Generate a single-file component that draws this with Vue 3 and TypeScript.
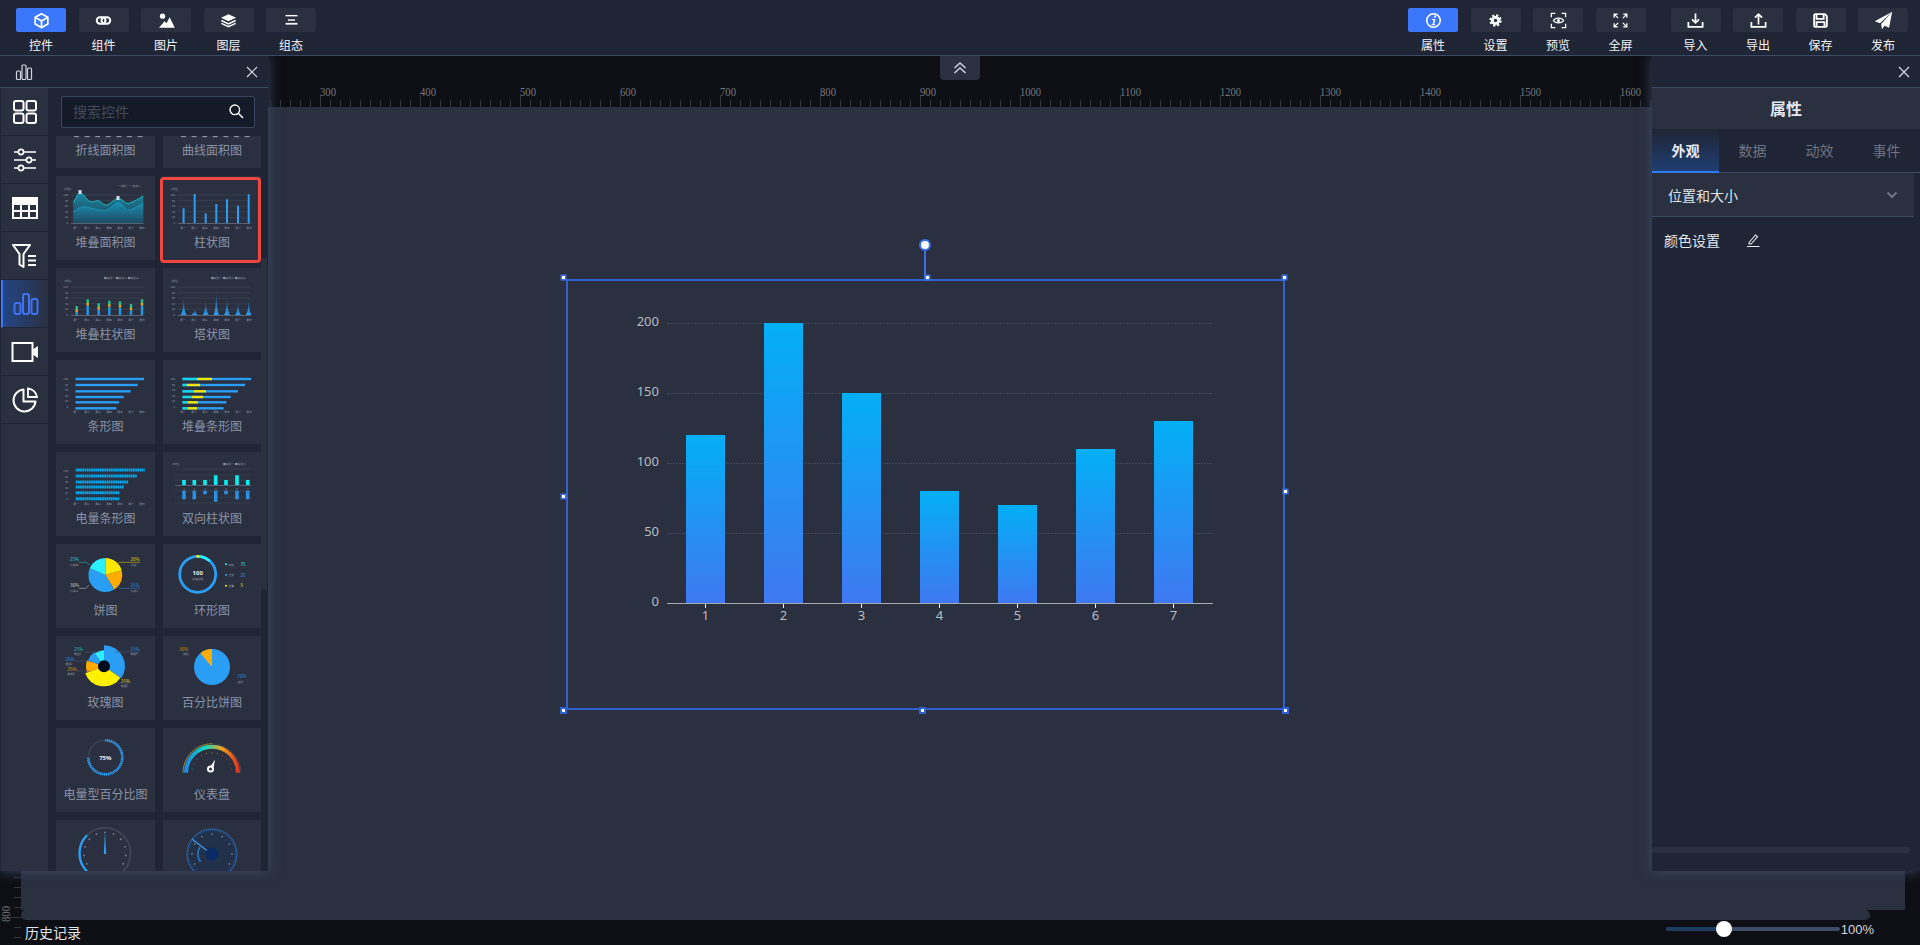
<script setup lang="ts">
type Pt = [number, number]
interface Card { name: string; kind: string; sel?: boolean }

const leftTools = [
  { label: '控件', on: true, icon: 'box' },
  { label: '组件', icon: 'link' },
  { label: '图片', icon: 'image' },
  { label: '图层', icon: 'layers' },
  { label: '组态', icon: 'align' },
]
const viewTools = [
  { label: '属性', on: true, icon: 'info' },
  { label: '设置', icon: 'gear' },
  { label: '预览', icon: 'scan' },
  { label: '全屏', icon: 'full' },
]
const fileTools = [
  { label: '导入', icon: 'import' },
  { label: '导出', icon: 'export' },
  { label: '保存', icon: 'save' },
  { label: '发布', icon: 'send' },
]
const railIcons = ['grid', 'sliders', 'table', 'filter', 'bars', 'video', 'pie']
const tabs = ['外观', '数据', '动效', '事件']

const cards: Card[] = [
  { name: '折线面积图', kind: 'blank' },
  { name: '曲线面积图', kind: 'blank' },
  { name: '堆叠面积图', kind: 'area' },
  { name: '柱状图', kind: 'bar', sel: true },
  { name: '堆叠柱状图', kind: 'stack' },
  { name: '塔状图', kind: 'tower' },
  { name: '条形图', kind: 'hbar' },
  { name: '堆叠条形图', kind: 'hstack' },
  { name: '电量条形图', kind: 'power' },
  { name: '双向柱状图', kind: 'both' },
  { name: '饼图', kind: 'pie' },
  { name: '环形图', kind: 'ring' },
  { name: '玫瑰图', kind: 'rose' },
  { name: '百分比饼图', kind: 'percent' },
  { name: '电量型百分比图', kind: 'dash' },
  { name: '仪表盘', kind: 'gauge' },
  { name: '', kind: 'speed' },
  { name: '', kind: 'dial' },
]

const hasAxis = ['area', 'bar', 'stack', 'tower', 'hbar', 'hstack', 'power']
const gridKinds = ['area', 'bar', 'stack', 'tower']
const days = ['周一', '周二', '周三', '周四', '周五', '周六', '周日']
const ys = [19, 24.6, 30.2, 35.8, 41.4, 47]
const yNums = ['100', '80', '60', '40', '20', '0']
const blankDots = Array.from({ length: 7 }, (_, i) => 18 + i * 10.6)

function pol(cx: number, cy: number, r: number, d: number): Pt {
  const a = ((d - 90) * Math.PI) / 180
  return [cx + r * Math.cos(a), cy + r * Math.sin(a)]
}
function sector(cx: number, cy: number, r: number, a: number, b: number): string {
  const s = pol(cx, cy, r, a)
  const e = pol(cx, cy, r, b)
  return `M${cx} ${cy}L${s[0]} ${s[1]}A${r} ${r} 0 ${b - a > 180 ? 1 : 0} 1 ${e[0]} ${e[1]}Z`
}
function arc(cx: number, cy: number, r: number, a: number, b: number): string {
  const s = pol(cx, cy, r, a)
  const e = pol(cx, cy, r, b)
  return `M${s[0]} ${s[1]}A${r} ${r} 0 ${b - a > 180 ? 1 : 0} 1 ${e[0]} ${e[1]}`
}
function smooth(p: Pt[]): string {
  let d = `M${p[0][0]} ${p[0][1]}`
  for (let i = 0; i < p.length - 1; i++) {
    const a = p[Math.max(i - 1, 0)]
    const b = p[i]
    const c = p[i + 1]
    const e = p[Math.min(i + 2, p.length - 1)]
    d += `C${b[0] + (c[0] - a[0]) / 6} ${b[1] + (c[1] - a[1]) / 6} ${c[0] - (e[0] - b[0]) / 6} ${c[1] - (e[1] - b[1]) / 6} ${c[0]} ${c[1]}`
  }
  return d
}
const areaA: Pt[] = [[17.3, 27.3], [24, 16.7], [34, 25.7], [42.3, 24.7], [50.7, 29], [62.3, 22.3], [72.3, 27.3], [87.3, 20]]
const areaB: Pt[] = [[17.3, 35.7], [27.3, 30.7], [40.7, 33.3], [50.7, 34], [62.3, 26.7], [72.3, 34], [87.3, 27.3]]
const areaALine = smooth(areaA)
const areaBLine = smooth(areaB)
const areaAFill = areaALine + 'L87.3 47L17.3 47Z'
const areaBFill = areaBLine + 'L87.3 47L17.3 47Z'

const barX = [20.6, 31.7, 42.7, 53.3, 64, 75, 85.7]
const barTop = [32.3, 18, 37.3, 28, 23.3, 29.7, 18.3]
const stackX = [20.7, 31.7, 42.7, 53.3, 64, 75, 86]
const stackTop = [38, 31.3, 35.3, 32.7, 33.3, 36, 31.3]
const towerTop = [30, 42, 33, 23.7, 30, 35, 32]
const hbarRows = [[19, 88], [25, 81.7], [31.3, 74.7], [37, 67.7], [42.3, 63], [48.3, 60.3]]
const hstackRows = [
  [19, 88, 34, 49], [25, 82, 24, 37], [31.3, 75, 31, 43], [37, 67.7, 29, 40], [42.3, 63.3, 25, 35], [48.3, 60.7, 25, 34],
]
const powerRows = [[18, 88.7], [24, 80.7], [30, 72.3], [35, 68], [40.7, 63.3], [46.7, 63.3]]
const bothX = [21, 31.3, 42, 52.7, 63, 74, 84.7]
const bothUp = [28, 28, 28, 23.3, 28, 23.3, 28]
const bothDown = [47.3, 47.3, 42.3, 49.7, 42.3, 47.3, 47.3]

const pieParts = [
  { a: 0, b: 75, c: '#ffe600' },
  { a: 75, b: 148, c: '#ffab00' },
  { a: 148, b: 293, c: '#2a9df4' },
  { a: 293, b: 360, c: '#2bf0ff' },
]
const pieNotes = [
  { x: 14, y: 17, t: '25%', s: '分类四', c: '#1fd0d8', l: 'M23 18.3H30L34 21' },
  { x: 74.5, y: 17, t: '20%', s: '分类一', c: '#e6d200', l: 'M84 18.3H64L60 20' },
  { x: 14, y: 43, t: '30%', s: '分类三', c: '#c8ccd4', l: 'M23 44.3H30L33 41' },
  { x: 74.5, y: 43, t: '25%', s: '分类二', c: '#2a8fe0', l: 'M84 44.3H64L60 41' },
]
const roseParts = [
  { a: 0, b: 125, r: 21, c: '#2a9df4' },
  { a: 125, b: 250, r: 20, c: '#fff200' },
  { a: 250, b: 290, r: 18, c: '#ffab00' },
  { a: 290, b: 325, r: 17, c: '#2a9df4' },
  { a: 325, b: 360, r: 16, c: '#2bf0ff' },
]
const roseNotes = [
  { x: 18, y: 15, t: '25%', s: '数据1', c: '#1fc8c8' },
  { x: 9.5, y: 25, t: '25%', s: '数据2', c: '#2a8fe0' },
  { x: 11.5, y: 35, t: '25%', s: '数据3', c: '#e0a000' },
  { x: 74.5, y: 15, t: '25%', s: '数据4', c: '#2a8fe0' },
  { x: 65, y: 47, t: '25%', s: '数据5', c: '#e6d200' },
]
const ringRows = [
  { y: 20.3, c: '#2bf0ff', l: '电站', v: '75' },
  { y: 31, c: '#2a9df4', l: '正常', v: '25' },
  { y: 41.7, c: '#ffe600', l: '告警', v: '5' },
]
const gaugeDots = Array.from({ length: 11 }, (_, i) => pol(49, 44.7, 20, -80 + i * 16))
const speedTicks = Array.from({ length: 11 }, (_, i) => pol(49, 33.3, 21, -120 + i * 24))
const dialTicks = Array.from({ length: 9 }, (_, i) => pol(49, 34, 20, -120 + i * 30))

/* rulers */
const topTicks = Array.from({ length: 191 }, (_, i) => i * 10)
const topMajors = Array.from({ length: 19 }, (_, i) => i * 100)
const sideTicks = Array.from({ length: 84 }, (_, i) => i * 10)

/* main chart: coordinates are local to the selection frame */
const base = 324
const scale = 1.4
const plotBars = [120, 200, 150, 80, 70, 110, 130]
const yTicks = [0, 50, 100, 150, 200]

const grips = [
  { x: 540, y: 168 }, { x: 904, y: 168 }, { x: 1261, y: 168 },
  { x: 540, y: 387 }, { x: 1262, y: 382 },
  { x: 539, y: 600, big: true }, { x: 898, y: 600, big: true }, { x: 1261, y: 600, big: true },
]
</script>

<template>
  <div class="app">
    <header class="topbar">
      <div class="tools">
        <div v-for="t in leftTools" :key="t.label" class="tool">
          <span class="tool-btn" :class="{ on: t.on }">
            <svg viewBox="0 0 24 24" class="ti">
              <g v-if="t.icon === 'box'" fill="none" stroke="#fff" stroke-width="2.200" stroke-linejoin="round"><path d="M12 3.500 20 8v8.500L12 21l-8-4.500V8z" /><path d="M4 8l8 4.500L20 8M12 12.500V21" /></g>
              <g v-else-if="t.icon === 'link'" fill="none" stroke="#fff" stroke-width="2.600"><rect x="3.500" y="8" width="11" height="8" rx="4" /><rect x="9.500" y="8" width="11" height="8" rx="4" /></g>
              <g v-else-if="t.icon === 'image'" fill="#fff"><circle cx="7" cy="6.500" r="3.300" /><path d="M2.500 21l7-8 2.500 2.500L16 8l6.500 13z" /></g>
              <g v-else-if="t.icon === 'layers'"><path fill="#fff" d="M12 4l9.500 4.500-9.500 4.500-9.500-4.500z" /><path fill="none" stroke="#fff" stroke-width="1.800" d="M3 12l9 4.300 9-4.300M3 15.500l9 4.300 9-4.300" /></g>
              <g v-else fill="#fff"><rect x="4.500" y="5" width="15" height="1.800" /><rect x="7.500" y="10.500" width="9" height="1.800" /><rect x="4.500" y="15" width="15" height="2.200" /></g>
            </svg>
          </span>
          <span class="tool-label">{{ t.label }}</span>
        </div>
      </div>
      <div class="tools right-a">
        <div v-for="t in viewTools" :key="t.label" class="tool">
          <span class="tool-btn" :class="{ on: t.on }">
            <svg viewBox="0 0 24 24" class="ti">
              <g v-if="t.icon === 'info'"><circle cx="12" cy="12" r="8.500" fill="none" stroke="#fff" stroke-width="2" /><path fill="#fff" d="M13 5.800h2.500l-.5 2.400h-2.500zM10 10h4.500l-1.700 6.500h1.700l-.4 1.500H9.300l.4-1.500h1.300L12 11.500h-2.400z" /></g>
              <g v-else-if="t.icon === 'gear'" fill="none" stroke="#fff"><circle cx="12" cy="12" r="4" stroke-width="3.600" /><circle cx="12" cy="12" r="6.500" stroke-width="2.600" stroke-dasharray="2.800 2.300" /></g>
              <g v-else-if="t.icon === 'scan'" fill="none" stroke="#fff" stroke-width="1.600"><path d="M3 8V3h5M16 3h5v5M21 16v5h-5M8 21H3v-5" /><path d="M5.500 12C8 8 16 8 18.500 12 16 16 8 16 5.500 12z" /><circle cx="12" cy="12" r="2" fill="#fff" stroke="none" /></g>
              <g v-else fill="none" stroke="#fff" stroke-width="1.600"><path d="M4 8.500V4h4.500M4 4l5 5M20 8.500V4h-4.500M20 4l-5 5M4 15.500V20h4.500M4 20l5-5M20 15.500V20h-4.500M20 20l-5-5" /></g>
            </svg>
          </span>
          <span class="tool-label">{{ t.label }}</span>
        </div>
      </div>
      <div class="tools right-b">
        <div v-for="t in fileTools" :key="t.label" class="tool">
          <span class="tool-btn">
            <svg viewBox="0 0 24 24" class="ti">
              <g v-if="t.icon === 'import'" fill="none" stroke="#fff" stroke-width="2.200"><path d="M3 14v6h18v-6" /><path d="M12 3v12M7.500 10.500l4.500 4.500 4.500-4.500" /></g>
              <g v-else-if="t.icon === 'export'" fill="none" stroke="#fff" stroke-width="2.200"><path d="M3 14v6h18v-6" /><path d="M12 17V4.500M7.500 8.500 12 4l4.500 4.500" /></g>
              <g v-else-if="t.icon === 'save'" fill="none" stroke="#fff" stroke-width="2.400"><path d="M4 5.500A1.500 1.500 0 0 1 5.500 4h12L20 6.500v12a1.500 1.500 0 0 1-1.500 1.500h-13A1.500 1.500 0 0 1 4 18.500z" /><path d="M7 4v6h9V4M7 20v-6h10v6" /></g>
              <g v-else fill="#fff"><path d="M23 1 1 13l6.500 2.500L23 1zM23 1 9 16.500 10 23l3.500-4.500 5.500 2.500z" /></g>
            </svg>
          </span>
          <span class="tool-label">{{ t.label }}</span>
        </div>
      </div>
    </header>

    <div class="work">
      <div class="ruler-top">
        <svg width="1920" height="51" class="ruler-svg">
          <line v-for="v in topTicks" :key="v" :x1="v + 20.5" :x2="v + 20.5" :y1="v % 100 === 0 ? 39 : 44" y2="51" stroke="#33363d" />
          <text v-for="v in topMajors" :key="'t' + v" :x="v + 20" y="40" class="ruler-num" :textLength="v >= 1000 ? 21 : 16" lengthAdjust="spacingAndGlyphs">{{ v }}</text>
        </svg>
      </div>

      <div class="below">
        <div class="ruler-left">
          <svg width="21" height="838">
            <line v-for="v in sideTicks" :key="v" :x1="v % 100 === 0 ? 10 : 14" x2="21" :y1="v + 10.500" :y2="v + 10.500" stroke="#33363d" />
            <text x="0" y="0" class="ruler-num" transform="translate(10 815) rotate(-90)" textLength="16" lengthAdjust="spacingAndGlyphs">800</text>
          </svg>
        </div>

        <div class="main">
          <div class="canvas">
            <div class="rotate-line"></div>
            <div class="rotate-dot"></div>
            <i v-for="(g, i) in grips" :key="i" class="grip" :class="{ big: g.big }" :style="{ left: g.x + 'px', top: g.y + 'px' }"></i>
            <div class="frame">
              <svg width="719" height="431" class="plot">
                <defs>
                  <linearGradient id="bar-fill" x1="0" y1="0" x2="0" y2="1">
                    <stop offset="0" stop-color="#03aff5" />
                    <stop offset="1" stop-color="#3f78f1" />
                  </linearGradient>
                </defs>
                <g v-for="t in yTicks" :key="t">
                  <line v-if="t > 0" x1="101" x2="647" :y1="base - t * scale + 0.5" :y2="base - t * scale + 0.5" stroke="#41485a" stroke-dasharray="2 1" />
                  <text x="93" :y="base - t * scale + 3" class="plot-num" text-anchor="end">{{ t }}</text>
                </g>
                <rect v-for="(b, i) in plotBars" :key="i" :x="120 + i * 78" :y="base - b * scale" width="39" :height="b * scale" fill="url(#bar-fill)" />
                <line x1="101" x2="647" :y1="base + 0.5" :y2="base + 0.5" stroke="#a5a8ae" />
                <g v-for="(b, i) in plotBars" :key="'x' + i">
                  <line :x1="139.500 + i * 78" :x2="139.500 + i * 78" :y1="base + 1" :y2="base + 5" stroke="#eceef2" />
                  <text :x="139.500 + i * 78" :y="base + 17" class="plot-num" text-anchor="middle">{{ i + 1 }}</text>
                </g>
              </svg>
            </div>
          </div>
          <div class="hscroll"><div class="hthumb"></div></div>
          <div class="status">
            <span class="history">历史记录</span>
            <div class="zoom">
              <div class="slider"><b class="slider-done"></b><b class="slider-knob"></b></div>
              <span class="zoom-val">100%</span>
            </div>
          </div>
        </div>
        <div class="gutter"></div>
      </div>

      <div class="collapse">
        <svg viewBox="0 0 16 16" width="16" height="16" fill="none" stroke="#c8d0e0" stroke-width="1.600"><path d="M2.500 8 8 3l5.500 5M2.500 13 8 8l5.500 5" /></svg>
      </div>

      <aside class="panel left">
        <div class="p-head">
          <svg viewBox="0 0 18 18" width="18" height="18" fill="none" stroke="#cfd5e0" stroke-width="1.200"><rect x="1.500" y="8" width="4" height="8.500" rx="1" /><rect x="7" y="2" width="4" height="14.500" rx="1" /><rect x="12.500" y="5" width="4" height="11.500" rx="1" /></svg>
          <svg viewBox="0 0 12 12" width="12" height="12" stroke="#d5d9e2" stroke-width="1.200"><path d="M1 1l10 10M11 1 1 11" /></svg>
        </div>
        <div class="lp-body">
          <nav class="rail">
            <div v-for="r in railIcons" :key="r" class="rail-item" :class="{ on: r === 'bars' }">
              <svg viewBox="0 0 28 28" width="28" height="28" fill="none" stroke="#fff" stroke-width="2">
                <g v-if="r === 'grid'"><rect x="3" y="3" width="9.500" height="9.500" rx="2" /><rect x="15.500" y="3" width="9.500" height="9.500" rx="2" /><rect x="3" y="15.500" width="9.500" height="9.500" rx="2" /><rect x="15.500" y="15.500" width="9.500" height="9.500" rx="2" /></g>
                <g v-else-if="r === 'sliders'" stroke-width="1.600"><path d="M3 6h22M3 14h22M3 22h22" /><circle cx="10" cy="6" r="2.600" fill="#2a3040" /><circle cx="18" cy="14" r="2.600" fill="#2a3040" /><circle cx="10" cy="22" r="2.600" fill="#2a3040" /></g>
                <g v-else-if="r === 'table'"><rect x="2" y="4" width="24" height="20" /><path fill="#fff" d="M2 4h24v6H2z" /><path d="M2 17h24M10 10v14M18 10v14" /></g>
                <g v-else-if="r === 'filter'"><path d="M2 3h17l-6.500 9v13l-4-2.500V12z" stroke-linejoin="round" /><path d="M17 14h8M17 18.500h8M17 23h8" /></g>
                <g v-else-if="r === 'bars'" stroke="#3f73f2"><rect x="2.500" y="13" width="6" height="11" rx="2" /><rect x="11" y="4" width="6" height="20" rx="2" /><rect x="19.500" y="9" width="6" height="15" rx="2" /></g>
                <g v-else-if="r === 'video'"><rect x="1.500" y="5" width="20" height="18" /><path fill="#fff" stroke="none" d="M21 12l6-4v12l-6-4z" /></g>
                <g v-else><path d="M12.500 3.500a11 11 0 1 0 12 12H12.500z" stroke-linejoin="round" /><path d="M17 2.500A10 10 0 0 1 26 11H17z" stroke-width="1.800" /></g>
              </svg>
            </div>
          </nav>
          <div class="lp-col">
            <div class="search">
              <input class="search-input" placeholder="搜索控件" />
              <svg viewBox="0 0 16 16" width="16" height="16" fill="none" stroke="#fff" stroke-width="1.400"><circle cx="6.800" cy="6.800" r="4.800" /><path d="m10.500 10.500 4.500 4.500" /></svg>
            </div>
            <div class="list">
              <div class="list-inner">
                <div v-for="c in cards" :key="c.kind + c.name" class="card" :class="{ sel: c.sel }">
                  <svg viewBox="0 0 99 60" width="99" height="60" class="thumb">
                    <defs v-if="c.kind === 'area'">
                      <linearGradient id="a-top" x1="0" y1="0" x2="0" y2="1"><stop offset="0" stop-color="#159db6" stop-opacity=".85" /><stop offset="1" stop-color="#13607f" stop-opacity=".4" /></linearGradient>
                      <linearGradient id="a-low" x1="0" y1="0" x2="0" y2="1"><stop offset="0" stop-color="#1a8fb0" /><stop offset="1" stop-color="#1a6080" stop-opacity=".3" /></linearGradient>
                    </defs>
                    <defs v-if="c.kind === 'tower'">
                      <linearGradient id="t-fill" x1="0" y1="0" x2="0" y2="1"><stop offset="0" stop-color="#2a9df4" stop-opacity=".25" /><stop offset="1" stop-color="#2a9df4" /></linearGradient>
                    </defs>
                    <defs v-if="c.kind === 'gauge'">
                      <linearGradient id="g-fill" gradientUnits="userSpaceOnUse" x1="22" y1="0" x2="76" y2="0"><stop offset="0" stop-color="#1e88e5" /><stop offset=".38" stop-color="#14d8c0" /><stop offset=".68" stop-color="#f0a020" /><stop offset="1" stop-color="#e0301e" /></linearGradient>
                    </defs>

                    <rect v-if="c.kind === 'blank'" v-for="x in blankDots" :key="x" :x="x" y="52" width="5" height="1.200" fill="#8a90a0" />
                    <g v-if="gridKinds.includes(c.kind)">
                      <line v-for="y in ys.slice(0, 5)" :key="y" x1="15" x2="87.500" :y1="y" :y2="y" stroke="#3e4656" stroke-width=".6" />
                    </g>
                    <g v-if="hasAxis.includes(c.kind)" class="tiny">
                      <text v-for="(y, i) in ys" :key="y" x="12" :y="y + 1" text-anchor="end">{{ yNums[i] }}</text>
                      <text v-for="(d, i) in days" :key="d" :x="20 + i * 11" y="53" text-anchor="middle">{{ d }}</text>
                    </g>
                    <line v-if="gridKinds.includes(c.kind)" x1="15" x2="87.500" y1="47.500" y2="47.500" stroke="#596273" stroke-width="1" />
                    <text v-if="gridKinds.includes(c.kind)" x="8" y="14" class="tiny-t">(单位)</text>

                    <g v-if="c.kind === 'area'">
                      <path :d="areaAFill" fill="url(#a-top)" />
                      <path :d="areaBFill" fill="url(#a-low)" />
                      <path :d="areaALine" fill="none" stroke="#1cc0c8" stroke-width=".9" />
                      <path :d="areaBLine" fill="none" stroke="#1a9fc4" stroke-width=".7" />
                      <rect x="22.500" y="14" width="3" height="4" fill="#d8dce4" /><rect x="60.500" y="20" width="3" height="4" fill="#d8dce4" />
                      <text x="62" y="11" class="tiny-t">一类别一 一类别二</text>
                    </g>
                    <rect v-if="c.kind === 'bar'" v-for="(x, i) in barX" :key="'b' + i" :x="x - 1" :y="barTop[i]" width="2" :height="47 - barTop[i]" fill="#2a9df4" />
                    <g v-if="c.kind === 'stack'">
                      <g v-for="(x, i) in stackX" :key="i">
                        <rect :x="x - 1.200" :y="stackTop[i]" width="2.400" height="4.500" fill="#21c28a" />
                        <rect :x="x - 1.200" :y="stackTop[i] + 3.500" width="2.400" height="3" fill="#e0a020" />
                        <rect :x="x - 1.200" :y="stackTop[i] + 6.500" width="2.400" :height="40.500 - stackTop[i]" fill="#1d9be8" />
                      </g>
                      <text x="48" y="11" class="tiny-t">■类别一 ■类别二 ■类别三</text>
                    </g>
                    <g v-if="c.kind === 'tower'">
                      <path v-for="(x, i) in barX" :key="i" :d="`M${x - 3} 47Q${x - 0.500} 44 ${x} ${towerTop[i]}Q${x + 0.500} 44 ${x + 3} 47Z`" fill="url(#t-fill)" />
                      <text x="48" y="11" class="tiny-t">■类别一 ■类别二 ■类别三</text>
                    </g>
                    <rect v-if="c.kind === 'hbar'" v-for="r in hbarRows" :key="r[0]" x="19.500" :y="r[0] - 1.200" :width="r[1] - 19.500" height="2.400" fill="#2a9df4" />
                    <g v-if="c.kind === 'hstack'">
                      <g v-for="r in hstackRows" :key="r[0]">
                        <rect x="19.500" :y="r[0] - 1.200" :width="r[1] - 19.500" height="2.400" fill="#2a9df4" />
                        <rect :x="r[2]" :y="r[0] - 1.200" :width="r[3] - r[2]" height="2.400" fill="#f2e400" />
                        <rect x="19.500" :y="r[0] - 1.200" :width="r[2] - 19.500" height="2.400" fill="#14d6e6" />
                      </g>
                    </g>
                    <line v-if="c.kind === 'power'" v-for="r in powerRows" :key="r[0]" x1="19.700" :x2="r[1]" :y1="r[0]" :y2="r[0]" stroke="#00aaee" stroke-width="3" stroke-dasharray="1.800 .4" />
                    <g v-if="c.kind === 'both'">
                      <line v-for="y in [17, 23, 28, 39, 45, 51]" :key="y" x1="12" x2="88" :y1="y" :y2="y" stroke="#3e4656" stroke-width=".6" />
                      <line x1="12" x2="88" y1="33.500" y2="33.500" stroke="#596273" />
                      <g v-for="(x, i) in bothX" :key="i">
                        <rect :x="x - 1.800" :y="bothUp[i]" width="3.600" :height="33 - bothUp[i]" fill="#06f0f0" />
                        <rect :x="x - 1.800" y="38.700" width="3.600" :height="bothDown[i] - 38.700" fill="#2a8fe0" />
                        <text :x="x" y="37.500" class="tiny-t" text-anchor="middle">{{ i + 1 }}</text>
                      </g>
                      <text x="9" y="13" class="tiny-t">(单位)</text>
                      <text x="60" y="13" class="tiny-t">■类别一 ■类别二</text>
                    </g>
                    <g v-if="c.kind === 'pie'">
                      <path v-for="p in pieParts" :key="p.c" :d="sector(49.300, 31, 17, p.a, p.b)" :fill="p.c" />
                      <g v-for="n in pieNotes" :key="n.x + n.t + n.y">
                        <path :d="n.l" fill="none" :stroke="n.c" stroke-width=".5" />
                        <text :x="n.x" :y="n.y" :fill="n.c" class="note">{{ n.t }}</text>
                        <text :x="n.x" :y="n.y + 4.500" class="tiny-t">{{ n.s }}</text>
                      </g>
                    </g>
                    <g v-if="c.kind === 'ring'">
                      <circle cx="34.700" cy="30.300" r="18" fill="none" stroke="#2a9df4" stroke-width="2.800" />
                      <path :d="arc(34.700, 30.300, 18, 2, 42)" fill="none" stroke="#2bf0ff" stroke-width="2.800" />
                      <circle cx="34.700" cy="12.300" r="1.500" fill="#ffe600" />
                      <text x="34.700" y="31" class="ring-num" text-anchor="middle">100</text>
                      <text x="34.700" y="36" class="tiny-t" text-anchor="middle">设备总数</text>
                      <g v-for="r in ringRows" :key="r.l">
                        <circle cx="63" :cy="r.y" r="1" :fill="r.c" />
                        <text x="65.500" :y="r.y + 1.200" class="tiny-t">{{ r.l }}</text>
                        <text x="77.500" :y="r.y + 1.500" class="note" :fill="r.c">{{ r.v }}</text>
                      </g>
                    </g>
                    <g v-if="c.kind === 'rose'">
                      <path v-for="p in roseParts" :key="p.a" :d="sector(48, 30.300, p.r, p.a, p.b)" :fill="p.c" />
                      <circle cx="48" cy="30.300" r="6" fill="#020a1c" />
                      <g v-for="n in roseNotes" :key="n.s">
                        <text :x="n.x" :y="n.y" :fill="n.c" class="note">{{ n.t }}</text>
                        <text :x="n.x" :y="n.y + 4" class="tiny-t">{{ n.s }}</text>
                      </g>
                      <path d="M28 16H44M19 25H36M21 35H34M84 16H58M75 47H60" fill="none" stroke="#4a5568" stroke-width=".5" />
                    </g>
                    <g v-if="c.kind === 'percent'">
                      <circle cx="49" cy="31" r="18" fill="#2a9df4" />
                      <path :d="sector(49, 31, 18, 320, 360)" fill="#ffab00" />
                      <text x="16" y="14.500" class="note" fill="#d09000">30%</text>
                      <text x="20" y="19" class="tiny-t">类别</text>
                      <text x="74.500" y="42" class="note" fill="#2a8fe0">70%</text>
                      <text x="74.500" y="47" class="tiny-t">类别</text>
                    </g>
                    <g v-if="c.kind === 'dash'">
                      <circle cx="49.300" cy="29.300" r="17" fill="none" stroke="#3a4250" stroke-width="1.600" />
                      <path :d="arc(49.300, 29.300, 17, 0, 270)" fill="none" stroke="#2a9df4" stroke-width="2.800" stroke-dasharray="1.300 .6" />
                      <text x="49.300" y="31.500" class="ring-num" text-anchor="middle">75%</text>
                    </g>
                    <g v-if="c.kind === 'gauge'">
                      <path :d="arc(49, 44.700, 29, -90, 0)" fill="none" stroke="#c09a20" stroke-width=".8" />
                      <path :d="arc(49, 44.700, 29, 0, 90)" fill="none" stroke="#3d4555" stroke-width=".8" />
                      <path :d="arc(49, 44.700, 26, -90, 90)" fill="none" stroke="url(#g-fill)" stroke-width="4" />
                      <circle v-for="(p, i) in gaugeDots" :key="i" :cx="p[0]" :cy="p[1]" r=".7" :fill="i < 4 ? '#2a6a80' : i < 7 ? '#7a6a30' : '#7a3a2a'" />
                      <path d="M52 31.500 47.500 38.500 50.500 40z" fill="#fff" />
                      <circle cx="47.500" cy="41" r="2.500" fill="none" stroke="#fff" stroke-width="2" />
                    </g>
                    <g v-if="c.kind === 'speed'">
                      <path :d="arc(49, 33.300, 25.500, -135, 135)" fill="none" stroke="#3d4555" stroke-width="2" />
                      <path :d="arc(49, 33.300, 25.500, -135, -45)" fill="none" stroke="#2a9df4" stroke-width="2.400" />
                      <circle v-for="(p, i) in speedTicks" :key="i" :cx="p[0]" :cy="p[1]" r=".9" fill="#7c8494" />
                      <path d="M49 11 47.800 34h2.400z" fill="#2a9df4" />
                    </g>
                    <g v-if="c.kind === 'dial'">
                      <circle cx="49" cy="34" r="25" fill="#23304a" stroke="#2a6ab0" />
                      <circle cx="49" cy="34" r="23.500" fill="none" stroke="#2a6ab0" stroke-width="1.500" stroke-dasharray=".5 1.500" />
                      <circle v-for="(p, i) in dialTicks" :key="i" :cx="p[0]" :cy="p[1]" r=".7" fill="#9aa4b4" />
                      <path :d="arc(49, 34, 14, -125, -60)" fill="none" stroke="#2a7ac8" stroke-width="1.500" />
                      <path d="M29 19 47 33" stroke="#3f9ae0" stroke-width="1.300" />
                      <circle cx="49" cy="34" r="6.500" fill="#0a2a66" />
                    </g>
                  </svg>
                  <div class="card-name">{{ c.name }}</div>
                </div>
              </div>
            </div>
            <div class="lp-thumb"></div>
          </div>
        </div>
      </aside>

      <aside class="panel right">
        <div class="p-head end">
          <svg viewBox="0 0 12 12" width="12" height="12" stroke="#d5d9e2" stroke-width="1.200"><path d="M1 1l10 10M11 1 1 11" /></svg>
        </div>
        <div class="rp-title">属性</div>
        <div class="rp-tabs">
          <span v-for="(t, i) in tabs" :key="t" class="rp-tab" :class="{ on: i === 0 }">{{ t }}</span>
        </div>
        <div class="rp-section">
          <span>位置和大小</span>
          <svg viewBox="0 0 12 12" width="12" height="12" fill="none" stroke="#6d7484" stroke-width="2"><path d="m1.500 3.500 4.500 4.500 4.500-4.500" /></svg>
        </div>
        <div class="rp-row">
          <span>颜色设置</span>
          <svg viewBox="0 0 16 16" width="16" height="16" fill="none" stroke="#e6e9ef" stroke-width="1.100"><path d="M4 10.500 10.500 3l2 1.800L6 12H4zM2 14.500h12.500" /></svg>
        </div>
        <div class="rp-fill"></div>
        <div class="rp-scroll"></div>
      </aside>
    </div>
  </div>
</template>

<style>
html, body { margin: 0; background: #0d0f14; }
</style>

<style scoped>
.app {
  width: 1920px;
  height: 945px;
  overflow: hidden;
  display: flex;
  flex-direction: column;
  font-family: "Noto Sans CJK SC", "Noto Sans", sans-serif;
  color: #fff;
  background: #0d0f14;
}
.topbar {
  height: 55px;
  flex: none;
  display: flex;
  background: #1f2534;
  border-bottom: 1px solid #3d4a63;
  padding-left: 16px;
  position: relative;
  z-index: 5;
}
.tools { display: flex; gap: 12.500px; padding-top: 8px; }
.right-a { margin-left: auto; }
.right-b { margin-left: 25px; padding-right: 12px; }
.tool { width: 50px; display: flex; flex-direction: column; align-items: center; }
.tool-btn {
  width: 50px;
  height: 24px;
  border-radius: 2px;
  background: #2a3040;
  display: flex;
  align-items: center;
  justify-content: center;
}
.tool-btn.on { background: #3b76fb; }
.ti { width: 19px; height: 19px; }
.tool-label { font-size: 12px; line-height: 18px; margin-top: 4px; color: #f2f4f8; }

.work { position: relative; flex: 1; min-height: 0; display: flex; flex-direction: column; }
.ruler-top { height: 51px; flex: none; background: #0d0f14; }
.ruler-svg { display: block; }
.ruler-num { font-family: "Liberation Serif", serif; font-size: 12px; fill: #74777d; }
.below { flex: 1; min-height: 0; display: flex; }
.ruler-left { width: 21px; flex: none; overflow: hidden; }
.ruler-left svg { display: block; }
.main { flex: 1; min-width: 0; display: flex; flex-direction: column; }
.gutter { width: 15px; flex: none; }
.canvas { flex: 1; min-height: 0; position: relative; background: #2a3040; }
.frame {
  position: absolute;
  left: 545px;
  top: 172px;
  width: 719px;
  height: 431px;
  box-sizing: border-box;
  border: 2px solid #2f62d0;
}
.plot { position: absolute; left: -2px; top: -2px; display: block; }
.plot-num { font-family: "Noto Sans", sans-serif; font-size: 13px; fill: #b8bbc2; }
.grip {
  position: absolute;
  width: 5px;
  height: 5px;
  box-sizing: border-box;
  background: #fff;
  border: 1px solid #3f70e0;
  box-shadow: 0 0 0 .5px #3f70e0;
  z-index: 1;
}
.grip.big { width: 7px; height: 7px; border: 2px solid #2f62d0; box-shadow: none; }
.rotate-line { position: absolute; left: 903px; top: 142px; width: 2px; height: 30px; background: #3a6ee8; }
.rotate-dot {
  position: absolute;
  left: 898px;
  top: 132px;
  width: 12px;
  height: 12px;
  box-sizing: border-box;
  border-radius: 50%;
  background: #fff;
  border: 2px solid #3a6ee8;
}
.hscroll { height: 10px; flex: none; }
.hthumb { width: 1849px; height: 10px; background: #2a3040; border-radius: 5px; }
.status { height: 25px; flex: none; display: flex; justify-content: space-between; padding: 0 31px 0 4px; }
.history { font-size: 14px; line-height: 25px; color: #e3e5ea; }
.zoom { display: flex; align-items: center; height: 18px; }
.slider { position: relative; width: 174px; height: 4px; border-radius: 2px; background: #3d4c69; }
.slider-done { position: absolute; left: 0; top: 0; height: 4px; width: 58px; border-radius: 2px; background: #1c3d5e; }
.slider-knob {
  position: absolute;
  left: 50px;
  top: -6px;
  width: 16px;
  height: 16px;
  border-radius: 50%;
  background: #fff;
}
.zoom-val { font-family: "Liberation Sans", sans-serif; font-size: 13px; color: #d5d8de; margin-left: 1px; }

.collapse {
  position: absolute;
  left: 940px;
  top: 0;
  width: 40px;
  height: 24px;
  background: #2a3040;
  border-radius: 0 0 4px 4px;
  display: flex;
  align-items: center;
  justify-content: center;
  z-index: 3;
}

.panel {
  position: absolute;
  top: 0;
  height: 815px;
  width: 268px;
  background: #1f2534;
  box-shadow: 0 0 12px #3d4a66;
  display: flex;
  flex-direction: column;
  z-index: 2;
}
.panel.left { left: 0; }
.panel.right { right: 0; }
.p-head {
  height: 31px;
  flex: none;
  box-sizing: content-box;
  border-bottom: 1px solid #3d4a63;
  display: flex;
  align-items: center;
  justify-content: space-between;
  padding: 0 10px 0 15px;
}
.p-head.end { justify-content: flex-end; }
.lp-body { flex: 1; min-height: 0; display: flex; }
.rail { width: 47px; margin-left: 1px; flex: none; background: #2a3040; }
.rail-item {
  height: 47px;
  border-bottom: 1px solid #1f2534;
  display: flex;
  align-items: center;
  justify-content: center;
  position: relative;
}
.rail-item.on {
  background: linear-gradient(90deg, #234686, #2a3040);
  border-left: 2px solid #3a78ff;
}
.lp-col { flex: 1; min-width: 0; position: relative; display: flex; flex-direction: column; }
.search {
  margin: 8px 0 8px 13px;
  width: 194px;
  height: 32px;
  box-sizing: border-box;
  border: 1px solid #3a4660;
  border-radius: 2px;
  background: #141a27;
  display: flex;
  align-items: center;
  padding: 0 10px 2px 11px;
}
.search-input {
  flex: 1;
  min-width: 0;
  border: 0;
  outline: 0;
  background: none;
  font: 14px "Noto Sans CJK SC", sans-serif;
  color: #fff;
  padding: 0;
}
.search-input::placeholder { color: #414a5e; opacity: 1; }
.list { flex: 1; min-height: 0; overflow: hidden; padding-left: 8px; }
.list-inner {
  display: grid;
  grid-template-columns: 99px 98px;
  grid-auto-rows: 84px;
  gap: 8px;
  margin-top: -52px;
}
.card { background: #2a3040; position: relative; overflow: visible; }
.card.sel::after {
  content: "";
  position: absolute;
  left: -3px;
  top: 1px;
  width: 101px;
  height: 86px;
  box-sizing: border-box;
  border: 3px solid #f0483e;
  border-radius: 4px;
}
.thumb { display: block; }
.card-name { font-size: 12px; line-height: 18px; margin-top: -2px; padding-top: 0; text-align: center; color: #8a92a6; transform: translateY(-1px); }
.tiny text { font-size: 2.800px; fill: #8a90a0; }
.tiny-t { font-size: 2.800px; fill: #9096a6; }
.note { font-size: 4.500px; }
.ring-num { font-size: 6px; font-weight: 700; fill: #e8eaee; font-family: "Noto Sans", sans-serif; }
.lp-thumb {
  position: absolute;
  right: 1px;
  top: 170px;
  width: 6px;
  height: 332px;
  background: #2a3040;
  border-radius: 3px;
}

.rp-title {
  height: 41px;
  flex: none;
  background: #2a3040;
  text-align: center;
  font-size: 16px;
  font-weight: 700;
  line-height: 41px;
  color: #e3e7ef;
}
.rp-tabs { height: 43px; flex: none; display: flex; border-bottom: 1px solid #3d4a63; }
.rp-tab { width: 67px; text-align: center; font-size: 14px; line-height: 43px; color: #6d7484; }
.rp-tab.on {
  color: #e8ebf2;
  font-weight: 700;
  background: linear-gradient(180deg, #1f2534, #1f3f74);
  box-shadow: inset 0 -2px 0 #2f7bf5;
  height: 44px;
}
.rp-section {
  width: 262px;
  height: 43px;
  flex: none;
  box-sizing: content-box;
  background: #2a3040;
  border-bottom: 1px solid #3d4a63;
  display: flex;
  align-items: center;
  justify-content: space-between;
  padding: 0;
  font-size: 14px;
  color: #dfe3ea;
}
.rp-section span { margin-left: 16px; }
.rp-section svg { margin-right: 16px; }
.rp-row {
  height: 46px;
  flex: none;
  display: flex;
  align-items: center;
  font-size: 14px;
  color: #e3e6ec;
  padding-left: 12px;
  gap: 25px;
}
.rp-fill { flex: 1; }
.rp-scroll { height: 6px; width: 258px; background: #2a3040; border-radius: 3px; margin-bottom: 18px; flex: none; }
</style>
